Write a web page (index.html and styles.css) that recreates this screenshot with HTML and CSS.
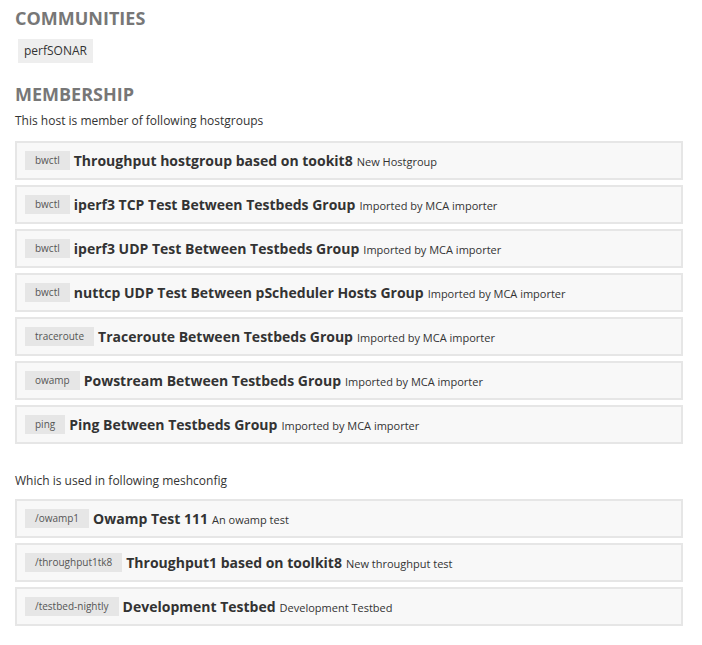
FILE: index.html
```html
<!DOCTYPE html>
<html>
<head>
<meta charset="utf-8">
<link rel="stylesheet" href="styles.css">
</head>
<body>
<div class="page">
  <h2 class="heading">COMMUNITIES</h2>
  <div class="tags"><span class="tag">perfSONAR</span></div>

  <h2 class="heading heading-2">MEMBERSHIP</h2>
  <p class="note">This host is member of following hostgroups</p>
  <div class="list">
    <div class="item"><span class="badge">bwctl</span><span class="title">Throughput hostgroup based on tookit8</span><span class="desc">New Hostgroup</span></div>
    <div class="item"><span class="badge">bwctl</span><span class="title">iperf3 TCP Test Between Testbeds Group</span><span class="desc">Imported by MCA importer</span></div>
    <div class="item"><span class="badge">bwctl</span><span class="title">iperf3 UDP Test Between Testbeds Group</span><span class="desc">Imported by MCA importer</span></div>
    <div class="item"><span class="badge">bwctl</span><span class="title">nuttcp UDP Test Between pScheduler Hosts Group</span><span class="desc">Imported by MCA importer</span></div>
    <div class="item"><span class="badge">traceroute</span><span class="title">Traceroute Between Testbeds Group</span><span class="desc">Imported by MCA importer</span></div>
    <div class="item"><span class="badge">owamp</span><span class="title">Powstream Between Testbeds Group</span><span class="desc">Imported by MCA importer</span></div>
    <div class="item"><span class="badge">ping</span><span class="title">Ping Between Testbeds Group</span><span class="desc">Imported by MCA importer</span></div>
  </div>

  <p class="note note-2">Which is used in following meshconfig</p>
  <div class="list">
    <div class="item"><span class="badge">/owamp1</span><span class="title">Owamp Test 111</span><span class="desc">An owamp test</span></div>
    <div class="item"><span class="badge">/throughput1tk8</span><span class="title">Throughput1 based on toolkit8</span><span class="desc">New throughput test</span></div>
    <div class="item"><span class="badge">/testbed-nightly</span><span class="title">Development Testbed</span><span class="desc">Development Testbed</span></div>
  </div>
</div>
</body>
</html>
```

FILE: styles.css
```css
html, body {
  margin: 0;
  padding: 0;
  background: #fff;
}
body {
  font-family: "Open Sans", "Liberation Sans", sans-serif;
  color: #333;
  font-size: 12px;
}
.page {
  width: 668px;
  padding: 6px 0 0 15px;
}
.heading {
  margin: 0;
  font-size: 18px;
  font-weight: 700;
  color: #777;
  line-height: 24px;
}
.heading-2 {
  margin-top: 19px;
}
.tags {
  margin-top: 9px;
  padding-left: 3px;
  display: flex;
}
.tag {
  background: #eee;
  font-size: 12px;
  line-height: 24px;
  padding: 0 6px;
  color: #333;
}
.note {
  margin: 6px 0 11px;
  font-size: 12px;
  line-height: 18px;
  color: #333;
}
.note-2 {
  margin: 28px 0 9px;
}
.list {
  display: flex;
  flex-direction: column;
  gap: 5px;
}
.item {
  display: flex;
  align-items: center;
  height: 39px;
  box-sizing: border-box;
  padding: 0 8px;
  border: 2px solid #e6e6e6;
  background: #f8f8f8;
}
.badge {
  background: #e6e6e6;
  color: #555;
  font-size: 10px;
  line-height: 19px;
  padding: 0 10px;
  margin-right: 4px;
}
.title {
  font-weight: 700;
  font-size: 14px;
  color: #333;
  margin-right: 4px;
}
.desc {
  font-size: 11px;
  color: #333;
  position: relative;
  top: 1px;
}
```
